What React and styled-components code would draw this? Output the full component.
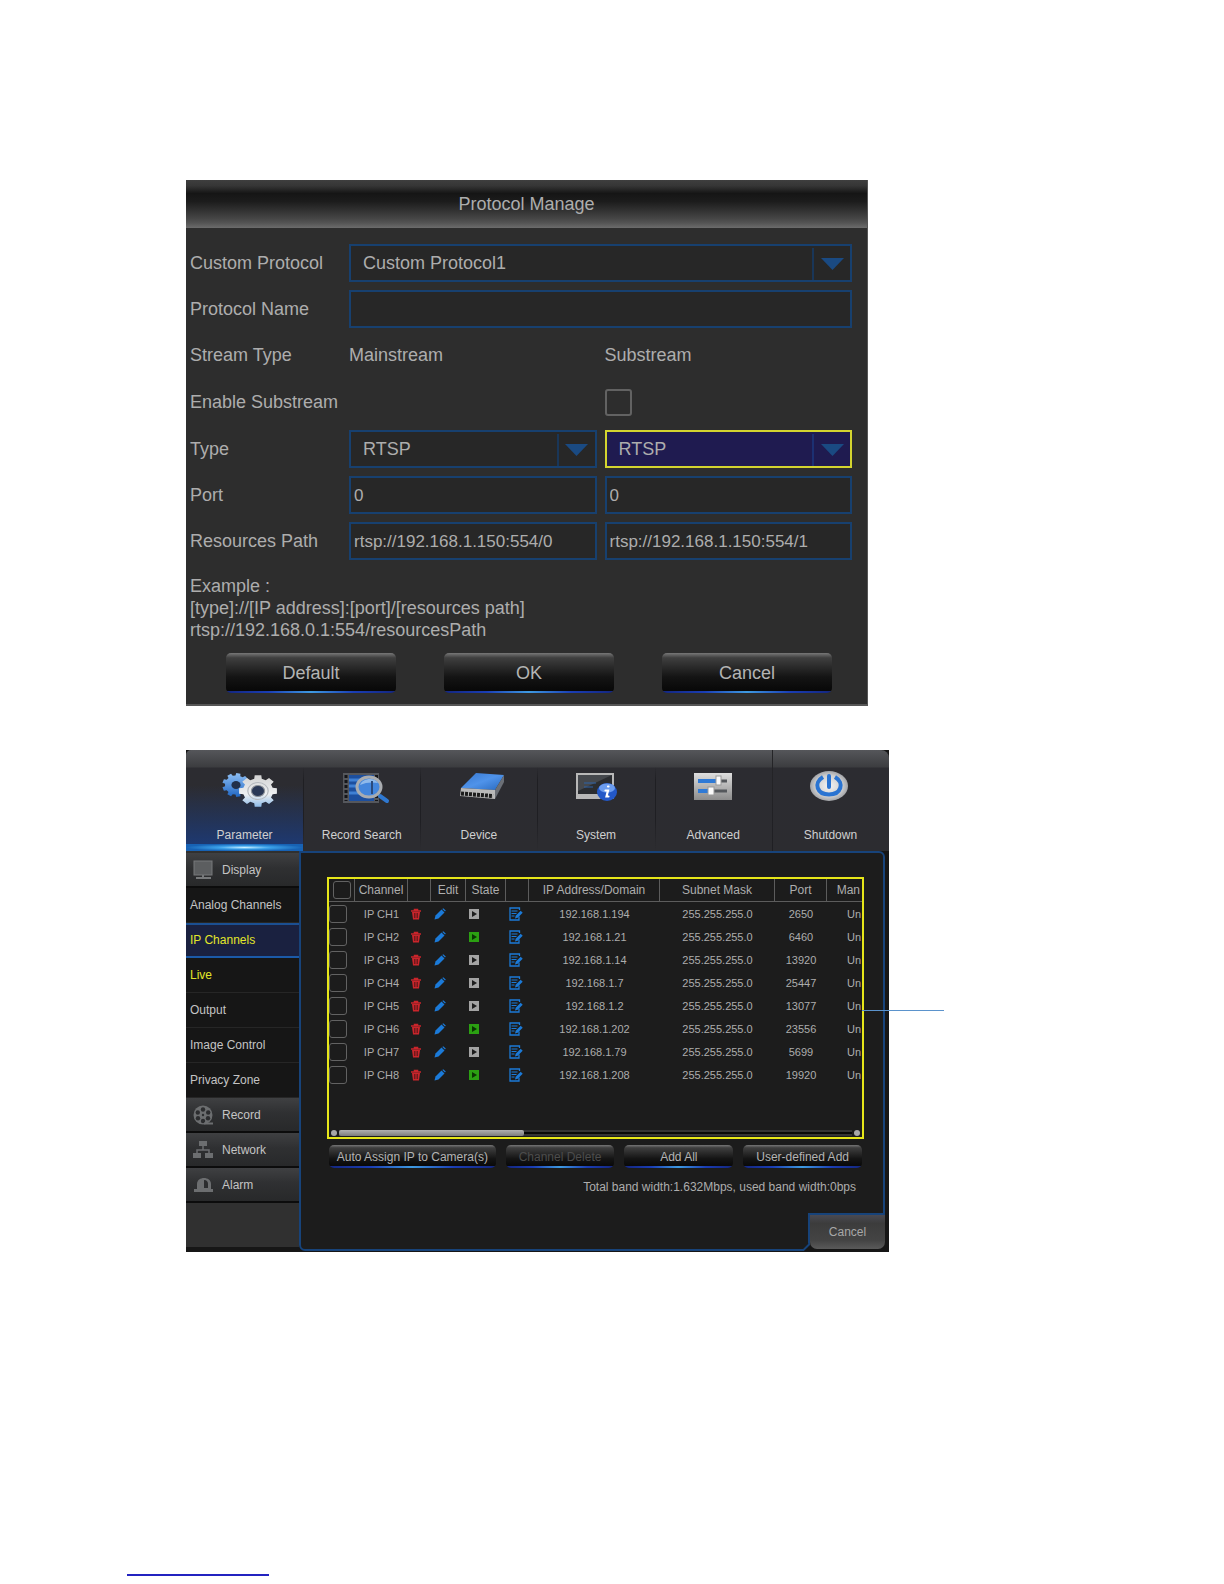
import React, { useState } from 'react';
import styled, { createGlobalStyle, css } from 'styled-components';

const channels = [
  { name: 'IP CH1', ip: '192.168.1.194', port: '2650', online: false },
  { name: 'IP CH2', ip: '192.168.1.21', port: '6460', online: true },
  { name: 'IP CH3', ip: '192.168.1.14', port: '13920', online: false },
  { name: 'IP CH4', ip: '192.168.1.7', port: '25447', online: false },
  { name: 'IP CH5', ip: '192.168.1.2', port: '13077', online: false },
  { name: 'IP CH6', ip: '192.168.1.202', port: '23556', online: true },
  { name: 'IP CH7', ip: '192.168.1.79', port: '5699', online: false },
  { name: 'IP CH8', ip: '192.168.1.208', port: '19920', online: true },
];

const tabs = [
  { label: 'Parameter', Icon: GearsIcon },
  { label: 'Record Search', Icon: RecordSearchIcon },
  { label: 'Device', Icon: DeviceIcon },
  { label: 'System', Icon: SystemIcon },
  { label: 'Advanced', Icon: AdvancedIcon },
  { label: 'Shutdown', Icon: ShutdownIcon },
];

const displayItems = [
  { label: 'Analog Channels' },
  { label: 'IP Channels', active: true },
  { label: 'Live', hover: true },
  { label: 'Output' },
  { label: 'Image Control' },
  { label: 'Privacy Zone' },
];

function App() {
  return (
    <>
      <GlobalStyle />
      <Page>
        <ProtocolDialog />
        <Recorder />
        <FootRule />
      </Page>
    </>
  );
}

export default App;

function SelectField({ id, label, options, focused }) {
  return (
    <SelectWrap $focused={focused}>
      <Select id={id} aria-label={label}>
        {options.map((option) => (
          <option key={option}>{option}</option>
        ))}
      </Select>
      <SelectArrow $focused={focused}>
        <svg width="23" height="12" viewBox="0 0 23 12">
          <path d="M0 0h23L11.500 12z" fill="#1a4a82" />
        </svg>
      </SelectArrow>
    </SelectWrap>
  );
}

function ProtocolDialog() {
  return (
    <Dialog>
      <DialogTitle>Protocol Manage</DialogTitle>
      <Form>
        <Label htmlFor="custom-protocol">Custom Protocol</Label>
        <Wide>
          <SelectField id="custom-protocol" options={['Custom Protocol1', 'Custom Protocol2']} />
        </Wide>
        <Label htmlFor="protocol-name">Protocol Name</Label>
        <Wide>
          <TextInput id="protocol-name" />
        </Wide>
        <Caption>Stream Type</Caption>
        <Caption>Mainstream</Caption>
        <Caption>Substream</Caption>
        <EnableLabel htmlFor="enable-substream">Enable Substream</EnableLabel>
        <CheckCell>
          <Check id="enable-substream" type="checkbox" $size={27} />
        </CheckCell>
        <Label htmlFor="main-type">Type</Label>
        <SelectField id="main-type" options={['RTSP', 'HTTP']} />
        <SelectField id="sub-type" label="Substream type" options={['RTSP', 'HTTP']} focused />
        <Label htmlFor="main-port">Port</Label>
        <TextInput id="main-port" defaultValue="0" />
        <TextInput aria-label="Substream port" defaultValue="0" />
        <Label htmlFor="main-path">Resources Path</Label>
        <TextInput id="main-path" defaultValue="rtsp://192.168.1.150:554/0" />
        <TextInput aria-label="Substream path" defaultValue="rtsp://192.168.1.150:554/1" />
      </Form>
      <Example>
        <p>Example :</p>
        <p>[type]://[IP address]:[port]/[resources path]</p>
        <p>rtsp://192.168.0.1:554/resourcesPath</p>
      </Example>
      <DialogButtons>
        <DialogButton type="button">Default</DialogButton>
        <DialogButton type="button">OK</DialogButton>
        <DialogButton type="button">Cancel</DialogButton>
      </DialogButtons>
    </Dialog>
  );
}

function Recorder() {
  const [tab, setTab] = useState('Parameter');

  return (
    <RecorderPanel>
      <Tabs>
        {tabs.map(({ label, Icon }) => (
          <Tab key={label} type="button" $active={tab === label} onClick={() => setTab(label)}>
            <Icon />
            <span>{label}</span>
          </Tab>
        ))}
      </Tabs>
      <RecorderBody>
        <Sidebar>
          <Group type="button">
            <DisplayIcon />
            Display
          </Group>
          {displayItems.map((item) => (
            <Item key={item.label} href="#display" $active={item.active} $hover={item.hover}>
              {item.label}
            </Item>
          ))}
          <Group type="button">
            <ReelIcon />
            Record
          </Group>
          <Group type="button">
            <NetworkIcon />
            Network
          </Group>
          <Group type="button">
            <AlarmIcon />
            Alarm
          </Group>
        </Sidebar>
        <Pane>
          <Frame>
            <ChannelTable />
            <ScrollBar>
              <Knob />
              <Track>
                <Thumb />
              </Track>
              <Knob />
            </ScrollBar>
            <Callout />
          </Frame>
          <Actions>
            <ActionButton type="button">Auto Assign IP to Camera(s)</ActionButton>
            <ActionButton type="button" disabled>
              Channel Delete
            </ActionButton>
            <ActionButton type="button">Add All</ActionButton>
            <ActionButton type="button">User-defined Add</ActionButton>
          </Actions>
          <Bandwidth>Total band width:1.632Mbps, used band width:0bps</Bandwidth>
          <CancelCorner>
            <Notch width="9" height="9" viewBox="0 0 9 9">
              <path d="M9 0v9H1z" fill="#161616" />
              <path d="M8.500 0v2L2.500 8H0" fill="none" stroke="#17437a" strokeWidth="2" />
            </Notch>
            <CancelTab type="button">Cancel</CancelTab>
          </CancelCorner>
        </Pane>
      </RecorderBody>
    </RecorderPanel>
  );
}

function ChannelTable() {
  return (
    <Table>
      <colgroup>
        <Col $width={26} />
        <Col $width={53} />
        <Col $width={23} />
        <Col $width={35} />
        <Col $width={40} />
        <Col $width={23} />
        <col />
        <Col $width={115} />
        <Col $width={52} />
        <Col $width={35} />
      </colgroup>
      <thead>
        <tr>
          <th>
            <Check type="checkbox" aria-label="Select all" $size={18} />
          </th>
          <th>Channel</th>
          <th />
          <th>Edit</th>
          <th>State</th>
          <th />
          <th>IP Address/Domain</th>
          <th>Subnet Mask</th>
          <th>Port</th>
          <ClipHead>Man</ClipHead>
        </tr>
      </thead>
      <tbody>
        {channels.map((channel) => (
          <tr key={channel.name}>
            <td>
              <Check type="checkbox" aria-label={channel.name} $size={18} />
            </td>
            <td>{channel.name}</td>
            <IconTd>
              <IconButton type="button" aria-label="Delete">
                <TrashIcon />
              </IconButton>
            </IconTd>
            <IconTd>
              <IconButton type="button" aria-label="Edit">
                <PencilIcon />
              </IconButton>
            </IconTd>
            <IconTd>
              <IconButton type="button" aria-label="Play">
                <StateIcon online={channel.online} />
              </IconButton>
            </IconTd>
            <IconTd>
              <IconButton type="button" aria-label="Notes">
                <NoteIcon />
              </IconButton>
            </IconTd>
            <td>{channel.ip}</td>
            <td>255.255.255.0</td>
            <td>{channel.port}</td>
            <ClipTd>Un</ClipTd>
          </tr>
        ))}
      </tbody>
    </Table>
  );
}

// icons

function gearPath(teeth, outer, inner) {
  const step = (Math.PI * 2) / teeth;
  const points = [];
  for (let i = 0; i < teeth; i += 1) {
    const a = i * step;
    [
      [inner, -0.32],
      [outer, -0.22],
      [outer, 0.22],
      [inner, 0.32],
    ].forEach(([r, k]) => {
      points.push(`${(r * Math.cos(a + k * step)).toFixed(2)} ${(r * Math.sin(a + k * step)).toFixed(2)}`);
    });
  }
  return `M${points.join('L')}Z`;
}

function GearsIcon() {
  return (
    <svg width="64" height="40" viewBox="0 0 64 40">
      <defs>
        <linearGradient id="gearBlue" x1="0" y1="0" x2="0" y2="1">
          <stop offset="0" stopColor="#8fc0f5" />
          <stop offset="1" stopColor="#1f66c4" />
        </linearGradient>
        <linearGradient id="gearWhite" x1="0" y1="0" x2="0" y2="1">
          <stop offset="0" stopColor="#d2d2d2" />
          <stop offset="0.6" stopColor="#eef0f2" />
          <stop offset="1" stopColor="#8dbbe9" />
        </linearGradient>
      </defs>
      <g transform="translate(23 16) scale(1.15 1)">
        <path d={gearPath(9, 12, 9.6)} fill="url(#gearBlue)" />
        <circle r="4" fill="#22304a" />
      </g>
      <g transform="translate(45 22) scale(1.2 1)">
        <path d={gearPath(8, 16, 12.6)} fill="url(#gearWhite)" />
        <circle r="8.500" fill="none" stroke="#b4b8bd" />
        <circle r="5.500" fill="#2a3856" stroke="#8d9299" />
      </g>
    </svg>
  );
}

function RecordSearchIcon() {
  return (
    <svg width="64" height="40" viewBox="0 0 64 40">
      <rect x="13" y="4" width="36" height="30" fill="#55575c" />
      <rect x="19" y="6" width="25" height="26" fill="#1d4f9e" />
      <path d="M19 11h25M19 17h25M19 24h25" stroke="#3f80d4" strokeWidth="3" />
      <path d="M16 6v26M46.500 6v26" stroke="#15161a" strokeWidth="3" strokeDasharray="3 2" />
      <path d="M50 27l7 5" stroke="#2f78d0" strokeWidth="4" strokeLinecap="round" />
      <ellipse cx="39" cy="18" rx="12" ry="10" fill="#4486dc" stroke="#a9acb0" strokeWidth="3" />
      <path d="M30 16c3-7 14-8 18-2-5-1-12-1-18 2z" fill="#8fb9ea" />
      <path d="M42 12v13" stroke="#2a4a7c" strokeWidth="2" />
    </svg>
  );
}

function DeviceIcon() {
  return (
    <svg width="64" height="40" viewBox="0 0 64 40">
      <defs>
        <linearGradient id="deviceTop" x1="0" y1="0" x2="1" y2="1">
          <stop offset="0" stopColor="#3676cf" />
          <stop offset="0.5" stopColor="#4f93ea" />
          <stop offset="1" stopColor="#2868bd" />
        </linearGradient>
      </defs>
      <path d="M29 4l28 2L48 21 14 19z" fill="url(#deviceTop)" />
      <path d="M57 6v7l-9 17v-9z" fill="#6b6f76" />
      <path d="M14 19l34 2v9l-35-3z" fill="#b9b9b9" />
      <path d="M14 24.500l32 2.500" stroke="#1c1c1c" strokeWidth="4" strokeDasharray="3 1" />
    </svg>
  );
}

function SystemIcon() {
  return (
    <svg width="64" height="40" viewBox="0 0 64 40">
      <rect x="12" y="4" width="38" height="26" fill="#b8b8b8" />
      <rect x="14" y="6" width="34" height="19" fill="#2b2d31" />
      <path d="M14 6h34L14 22z" fill="#45484d" />
      <path d="M20 14h12M20 18h9" stroke="#2f62a8" />
      <ellipse cx="43" cy="23" rx="10" ry="9" fill="#2358c8" />
      <ellipse cx="43" cy="19" rx="8" ry="4.500" fill="#6c9df0" />
      <path d="M44 17.500h.500M41.500 21.500h2.500l-1.500 6h2" fill="none" stroke="#fff" strokeWidth="2.200" strokeLinecap="round" />
    </svg>
  );
}

function AdvancedIcon() {
  return (
    <svg width="64" height="40" viewBox="0 0 64 40">
      <defs>
        <linearGradient id="advancedBack" x1="0" y1="0" x2="0" y2="1">
          <stop offset="0" stopColor="#dedede" />
          <stop offset="1" stopColor="#8c8c8c" />
        </linearGradient>
      </defs>
      <rect x="13" y="4" width="38" height="27" fill="url(#advancedBack)" />
      <path d="M36 12h10M30 22h16" stroke="#55585c" strokeWidth="3" />
      <path d="M17 12h20M17 22h12" stroke="#2f7ad6" strokeWidth="4" />
      <rect x="35" y="7" width="5" height="9" fill="#fafafa" stroke="#999" />
      <rect x="27" y="18" width="6" height="8" fill="#fafafa" stroke="#999" />
    </svg>
  );
}

function ShutdownIcon() {
  return (
    <svg width="64" height="40" viewBox="0 0 64 40">
      <defs>
        <radialGradient id="powerBack">
          <stop offset="0" stopColor="#f4f4f4" />
          <stop offset="0.7" stopColor="#cfcfcf" />
          <stop offset="1" stopColor="#a2a4a8" />
        </radialGradient>
      </defs>
      <ellipse cx="31" cy="17" rx="19" ry="15" fill="url(#powerBack)" />
      <path d="M25 8C15 14 19 25.500 31 25.500S47 14 37 8" fill="none" stroke="#2a74d2" strokeWidth="4" />
      <path d="M31 7v11" stroke="#2a74d2" strokeWidth="4" strokeLinecap="round" />
    </svg>
  );
}

function DisplayIcon() {
  return (
    <svg width="24" height="20" viewBox="0 0 24 20">
      <rect x="2" y="1" width="18" height="14" fill="#5c5e60" stroke="#77797b" />
      <path d="M11 15v3M4 18h15" stroke="#77797b" strokeWidth="2" />
    </svg>
  );
}

function ReelIcon() {
  return (
    <svg width="24" height="20" viewBox="0 0 24 20">
      <circle cx="11" cy="10" r="9.500" fill="#6c6e70" />
      <g fill="#2c2d2f">
        <circle cx="11" cy="4.500" r="2.200" />
        <circle cx="5.800" cy="7.500" r="2.200" />
        <circle cx="16.200" cy="7.500" r="2.200" />
        <circle cx="6" cy="13.300" r="2.200" />
        <circle cx="16" cy="13.300" r="2.200" />
        <circle cx="11" cy="16" r="2.200" />
        <circle cx="11" cy="10" r="1.200" />
      </g>
      <path d="M12 18.500h9" stroke="#6c6e70" strokeWidth="2" />
    </svg>
  );
}

function NetworkIcon() {
  return (
    <svg width="24" height="20" viewBox="0 0 24 20">
      <path d="M11 6v4M5 14v-4h12v4" fill="none" stroke="#6c6e70" strokeWidth="1.500" />
      <rect x="7" y="1" width="8" height="5" fill="#6c6e70" />
      <rect x="1" y="13" width="8" height="5" fill="#6c6e70" />
      <rect x="13" y="13" width="8" height="5" fill="#6c6e70" />
    </svg>
  );
}

function AlarmIcon() {
  return (
    <svg width="24" height="20" viewBox="0 0 24 20">
      <path d="M5 14V9c0-8 14-8 14 0v5z" fill="#6c6e70" />
      <path d="M12 5c3 0 4 2 4 4v4h-4z" fill="#2c2d2f" />
      <path d="M2 15.500h19" stroke="#6c6e70" strokeWidth="3" />
    </svg>
  );
}

function TrashIcon() {
  return (
    <svg width="10" height="12" viewBox="0 0 10 12">
      <path d="M0 3h10M3.500 2.500v-1h3v1" fill="none" stroke="#c9252b" strokeWidth="1.500" />
      <path d="M1 4h8l-1 7.500H2z" fill="#c9252b" />
      <path d="M3.500 5v5M5 5v5M6.500 5v5" stroke="#4a1315" strokeWidth="0.700" />
    </svg>
  );
}

function PencilIcon() {
  return (
    <svg width="12" height="12" viewBox="0 0 12 12">
      <path d="M0.500 11.500l1-4L7.500 1.500l3 3-6 6z" fill="#1b7ad8" />
      <path d="M8.300 0.900l.900-.700 2.600 2.400-.800 1z" fill="#1b7ad8" />
    </svg>
  );
}

function StateIcon({ online }) {
  return (
    <svg width="10" height="10" viewBox="0 0 10 10">
      <rect width="10" height="10" fill={online ? '#2ba012' : '#a3a3a3'} />
      <path d="M3 2l5 3-5 3z" fill={online ? '#0a3503' : '#1c1c1c'} />
    </svg>
  );
}

function NoteIcon() {
  return (
    <svg width="14" height="14" viewBox="0 0 14 14">
      <path d="M10 9.500V13H1V1h9.500v2" fill="none" stroke="#1b7ad8" strokeWidth="1.300" />
      <path d="M2.500 4h6M2.500 6.500h5M2.500 9h3" stroke="#1b7ad8" />
      <path d="M6 11.500l.700-2.800 5-5 2 2-5 5z" fill="#1b7ad8" />
    </svg>
  );
}

const GlobalStyle = createGlobalStyle`
  * {
    box-sizing: border-box;
  }

  body {
    margin: 0;
    background: #fff;
    font-family: 'Liberation Sans', Arial, sans-serif;
  }

  button, input, select {
    font-family: inherit;
    font-size: inherit;
    color: inherit;
    margin: 0;
  }

  p {
    margin: 0;
  }
`;

const Page = styled.main`
  min-height: 100vh;
  display: flex;
  flex-direction: column;
  padding: 180px 128px 8px 186px;
`;

const Dialog = styled.section`
  width: 100%;
  max-width: 682px;
  background: #2d2d2d;
  border-right: 1px solid #565656;
  border-bottom: 2px solid #565656;
  color: #adadad;
  font-size: 18px;
`;

const DialogTitle = styled.h1`
  margin: 0;
  height: 48px;
  font-size: 18px;
  font-weight: normal;
  line-height: 48px;
  text-align: center;
  background: linear-gradient(#3e3e3e 0%, #363636 12%, #151515 28%, #1c1c1c 45%, #454545 80%, #555 90%, #6c6c6c 100%);
`;

const Form = styled.form`
  display: grid;
  grid-template-columns: 151px 1fr 1fr;
  gap: 8px;
  padding: 16px 15px 15px 4px;
`;

const Wide = styled.div`
  grid-column: span 2;
`;

const Label = styled.label`
  line-height: 38px;
  white-space: nowrap;
`;

const Caption = styled.div`
  line-height: 39px;
`;

const EnableLabel = styled.label`
  grid-column: span 2;
  line-height: 39px;
`;

const CheckCell = styled.div`
  display: flex;
  align-items: center;
`;

const Check = styled.input`
  appearance: none;
  display: block;
  width: ${(props) => props.$size}px;
  height: ${(props) => props.$size}px;
  border: ${(props) => (props.$size > 20 ? 2 : 1)}px solid #626262;
  border-radius: 3px;

  &:checked {
    background: #1a4a82;
  }
`;

const TextInput = styled.input`
  display: block;
  width: 100%;
  height: 38px;
  padding: 2px 3px 0;
  border: 2px solid #17406f;
  background: #272727;
  font-size: 17px;
  outline: none;
`;

const SelectWrap = styled.div`
  position: relative;
  height: 38px;
  border: 2px solid ${(props) => (props.$focused ? '#d3d42f' : '#17406f')};
  background: ${(props) => (props.$focused ? '#1f1b50' : '#272727')};
`;

const Select = styled.select`
  appearance: none;
  width: 100%;
  height: 100%;
  padding: 0 44px 0 12px;
  border: 0;
  background: transparent;
  outline: none;
`;

const SelectArrow = styled.span`
  position: absolute;
  top: 2px;
  right: 0;
  bottom: 0;
  width: 38px;
  display: flex;
  align-items: center;
  justify-content: center;
  border-left: 2px solid ${(props) => (props.$focused ? '#1c3072' : '#193658')};
  pointer-events: none;
`;

const Example = styled.div`
  padding-left: 4px;
  line-height: 22px;
`;

const DialogButtons = styled.div`
  display: flex;
  justify-content: space-between;
  padding: 12px 35px 11px 40px;
`;

// black glossy button with the blue light along its bottom edge
const glossy = css`
  border: 0;
  border-radius: 5px;
  color: #b4b4b4;
  cursor: pointer;
  background:
    linear-gradient(90deg, #14267e, #1a3db4 25%, #3f9ae0 50%, #1a3db4 75%, #14267e) bottom / 100% 2px no-repeat,
    linear-gradient(#777 0, #3f3f3f 12%, #2a2a2a 35%, #141414 60%, #060606 100%);
`;

const DialogButton = styled.button`
  ${glossy}
  width: 170px;
  height: 40px;
  padding: 0;
`;

const RecorderPanel = styled.section`
  width: 100%;
  max-width: 703px;
  margin-top: 44px;
  background: #161616;
  color: #c4c4c4;
  font-size: 12px;
`;

const Tabs = styled.nav`
  display: grid;
  grid-template-columns: repeat(6, 1fr);
  border-radius: 5px 8px 0 0;
  background: linear-gradient(#55565a 0, #3c3d40 17px, #2c2c31 18px, #2c2c30 100%);
`;

const Tab = styled.button`
  position: relative;
  display: flex;
  flex-direction: column;
  align-items: center;
  gap: 18px;
  height: 101px;
  padding: 19px 0 0;
  border: 0;
  background: linear-gradient(transparent 17px, #1f1f23 30px, #1f1f23 70%, transparent) left / 1px 100% no-repeat;
  line-height: 16px;
  color: #d0d0d0;
  cursor: pointer;

  &:last-child {
    background: linear-gradient(#252528, #1f1f23) left / 1px 100% no-repeat;
  }

  ${(props) =>
    props.$active &&
    css`
      background: linear-gradient(transparent 35%, #1c3a78 100%);

      &::after {
        content: '';
        position: absolute;
        left: 0;
        right: 0;
        bottom: 0;
        height: 7px;
        background: radial-gradient(closest-side, #c9efff, #3aa0e8 45%, #1762b4 100%);
      }
    `}
`;

const RecorderBody = styled.div`
  display: flex;
  padding: 0 4px 1px 0;
`;

const Sidebar = styled.nav`
  width: 113px;
  flex: none;
  display: flex;
  flex-direction: column;
  margin-bottom: 4px;
  padding-top: 2px;
  background: #303030;
`;

const Group = styled.button`
  display: flex;
  align-items: center;
  gap: 6px;
  height: 35px;
  padding: 0 0 0 6px;
  border: 0;
  border-bottom: 2px solid #0c0c0c;
  background: linear-gradient(#3f4042, #2f3032 45%, #28292a);
  cursor: pointer;
`;

const Item = styled.a`
  height: 35px;
  padding-left: 4px;
  line-height: 34px;
  border-bottom: 1px solid #262626;
  background: #161616;
  color: ${(props) => (props.$active || props.$hover ? '#e2e62a' : 'inherit')};
  text-decoration: none;

  ${(props) =>
    props.$active &&
    css`
      line-height: 31px;
      border-top: 2px solid #1b4f92;
      border-bottom: 2px solid #1b5aa8;
      background: #1a2140;
    `}
`;

const Pane = styled.div`
  position: relative;
  flex: 1;
  min-width: 0;
  padding: 24px 19px 54px 26px;
  border: 2px solid #17437a;
  border-radius: 0 6px 0 6px;
  background: #1c1c1c;
`;

const Frame = styled.div`
  position: relative;
  border: 2px solid #e6e619;
`;

const Table = styled.table`
  width: 100%;
  margin-bottom: 43px;
  table-layout: fixed;
  border-collapse: separate;
  border-spacing: 0;
  font-size: 11px;
  text-align: center;
  color: #adadad;

  th {
    height: 23px;
    padding: 0;
    border-right: 1px solid #5c5c5c;
    border-bottom: 1px solid #5c5c5c;
    font-size: 12px;
    font-weight: normal;
    white-space: nowrap;
  }

  th input {
    margin: 0 auto;
  }

  td {
    height: 23px;
    padding: 0;
  }
`;

const Col = styled.col`
  width: ${(props) => props.$width}px;
`;

const ClipHead = styled.th`
  && {
    padding-right: 2px;
    border-right: 0;
    text-align: right;
  }
`;

const ClipTd = styled.td`
  && {
    padding-right: 1px;
    text-align: right;
  }
`;

const IconTd = styled.td`
  && {
    padding-left: 3px;
    text-align: left;
  }
`;

const IconButton = styled.button`
  display: block;
  padding: 0;
  border: 0;
  background: none;
  cursor: pointer;

  svg {
    display: block;
  }
`;

const ScrollBar = styled.div`
  display: flex;
  align-items: center;
  gap: 2px;
  height: 8px;
  padding: 0 2px;
`;

const Knob = styled.span`
  width: 6px;
  height: 6px;
  border-radius: 50%;
  background: #a8a8a8;
`;

const Track = styled.div`
  flex: 1;
  height: 6px;
  border: 2px solid #343434;
  border-width: 2px 0;
  background: #080808;
`;

const Thumb = styled.div`
  width: 36%;
  height: 6px;
  margin-top: -2px;
  border-radius: 2px;
  background: linear-gradient(#b0b0b0, #7c7c7c);
`;

const Callout = styled.span`
  position: absolute;
  top: 131px;
  left: 100%;
  width: 82px;
  height: 1px;
  background: #5b93cc;
`;

const Actions = styled.div`
  display: grid;
  grid-template-columns: 167fr 109fr 109fr 119fr;
  gap: 10px;
  padding: 6px 2px 0 2px;
`;

const ActionButton = styled.button`
  ${glossy}
  height: 23px;
  padding: 0;
  white-space: nowrap;

  &:disabled {
    color: #4c4c4c;
  }
`;

const Bandwidth = styled.p`
  margin-top: 11px;
  padding-right: 8px;
  line-height: 16px;
  text-align: right;
  color: #adadad;
`;

const CancelCorner = styled.div`
  position: absolute;
  right: -2px;
  bottom: -2px;
  width: 77px;
  height: 38px;
  border-top: 2px solid #17437a;
  border-left: 2px solid #17437a;
  background: #161616;
`;

const Notch = styled.svg`
  position: absolute;
  left: -9px;
  bottom: 0;
`;

const CancelTab = styled.button`
  display: block;
  width: 100%;
  height: 34px;
  padding: 0;
  border: 0;
  border-radius: 0 0 7px 7px;
  background: linear-gradient(#4a4a52, #3c3c3c 25%, #444 75%, #5a5a5a);
  color: #a8a8a8;
  cursor: pointer;
`;

const FootRule = styled.hr`
  width: 142px;
  margin: auto 0 0 -59px;
  border: 0;
  border-top: 2px solid #2323c0;
`;
